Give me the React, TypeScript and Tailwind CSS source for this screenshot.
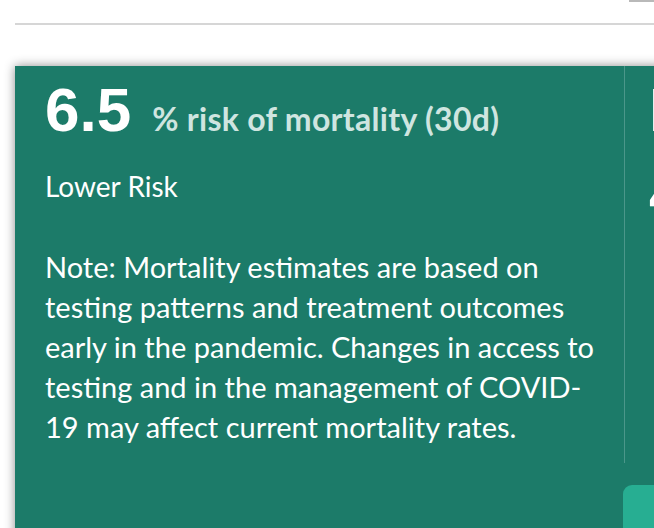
export default function App() {
  return (
    <div className="relative h-[528px] w-[654px] overflow-hidden bg-white">
      <div className="absolute right-0 top-0 h-[2px] w-[25px] bg-[#b9b9b9]" />
      <div className="ml-[15px] mt-[23px] h-[2px] bg-[#d6d6d6]" />
      <div className="ml-[15px] mt-[41px] flex h-[600px] w-[900px] bg-[#1c7b69] shadow-[0_0_10px_rgba(0,0,0,0.45)]">
        <div className="w-[609px] shrink-0 pl-[30px] pt-[14px] font-['Lato',sans-serif] text-white">
          <div className="flex items-baseline">
            <span className="font-['Liberation_Sans',Arial,sans-serif] text-[62px] font-bold leading-[60px]">6.5</span>
            <span className="ml-[21px] text-[32px] font-bold tracking-[0.3px] text-[#cfe5e0]">% risk of mortality (30d)</span>
          </div>
          <p className="mt-[23px] text-[28px] leading-[40px]">Lower Risk</p>
          <p className="mt-[41px] w-[560px] text-[29px] leading-[40px]">
            Note: Mortality estimates are based on testing patterns and treatment outcomes early in the pandemic. Changes in access to testing and in the management of COVID-19 may affect current mortality rates.
          </p>
        </div>
        <div className="h-[397px] w-px shrink-0 bg-[#4b978a]" />
        <div className="relative flex-1 pl-[24px] pt-[14px] text-white">
          <div className="font-['Liberation_Sans',Arial,sans-serif] text-[62px] font-bold leading-[60px]">Hospital</div>
          <div className="mt-[24px] font-['Liberation_Sans',Arial,sans-serif] text-[62px] font-bold leading-[60px]">4</div>
          <button className="absolute left-[-2px] top-[419px] h-[60px] w-[200px] rounded-tl-[9px] bg-[#27ae92]" />
        </div>
      </div>
    </div>
  );
}
